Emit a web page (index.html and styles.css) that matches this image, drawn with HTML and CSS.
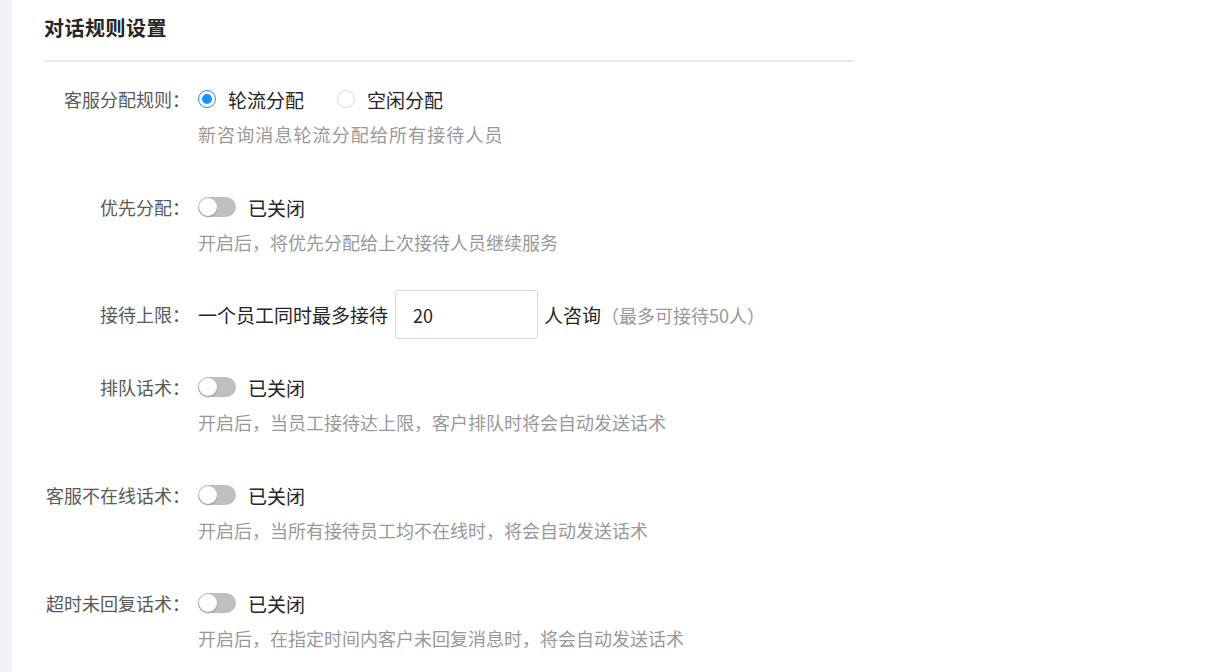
FILE: index.html
```html
<!DOCTYPE html>
<html lang="zh-CN">
<head>
    <meta charset="UTF-8">
    <meta name="viewport" content="width=device-width, initial-scale=1.0">
    <title>对话规则设置</title>
    <link rel="stylesheet" href="styles.css">
</head>
<body>

<div class="layout">
    <div class="side"></div>
    <div class="main">
        <div class="panel">
            <h2 class="panel-title">对话规则设置</h2>

            <div class="form">
                <div class="form-item">
                    <div class="form-label">客服分配规则：</div>
                    <div class="form-body">
                        <div class="form-row">
                            <label class="radio checked"><span class="radio-dot"></span>轮流分配</label>
                            <label class="radio"><span class="radio-dot"></span>空闲分配</label>
                        </div>
                        <div class="form-hint wide">新咨询消息轮流分配给所有接待人员</div>
                    </div>
                </div>

                <div class="form-item before-input">
                    <div class="form-label">优先分配：</div>
                    <div class="form-body">
                        <div class="form-row">
                            <span class="switch"><span class="switch-knob"></span></span>
                            <span class="switch-text">已关闭</span>
                        </div>
                        <div class="form-hint">开启后，将优先分配给上次接待人员继续服务</div>
                    </div>
                </div>

                <div class="form-item input-item">
                    <div class="form-label">接待上限：</div>
                    <div class="form-body">
                        <div class="form-row">
                            <span>一个员工同时最多接待</span>
                            <input class="num-input" type="text" value="20">
                            <span>人咨询</span>
                            <span class="tip">（最多可接待50人）</span>
                        </div>
                    </div>
                </div>

                <div class="form-item">
                    <div class="form-label">排队话术：</div>
                    <div class="form-body">
                        <div class="form-row">
                            <span class="switch"><span class="switch-knob"></span></span>
                            <span class="switch-text">已关闭</span>
                        </div>
                        <div class="form-hint">开启后，当员工接待达上限，客户排队时将会自动发送话术</div>
                    </div>
                </div>

                <div class="form-item">
                    <div class="form-label">客服不在线话术：</div>
                    <div class="form-body">
                        <div class="form-row">
                            <span class="switch"><span class="switch-knob"></span></span>
                            <span class="switch-text">已关闭</span>
                        </div>
                        <div class="form-hint">开启后，当所有接待员工均不在线时，将会自动发送话术</div>
                    </div>
                </div>

                <div class="form-item">
                    <div class="form-label">超时未回复话术：</div>
                    <div class="form-body">
                        <div class="form-row">
                            <span class="switch"><span class="switch-knob"></span></span>
                            <span class="switch-text">已关闭</span>
                        </div>
                        <div class="form-hint">开启后，在指定时间内客户未回复消息时，将会自动发送话术</div>
                    </div>
                </div>
            </div>
        </div>
    </div>
</div>

</body>
</html>
```

FILE: styles.css
```css
body {
    margin: 0;
    padding: 0;
    font-family: "Noto Sans CJK SC", "Noto Sans", sans-serif;
    font-size: 18px;
    color: #262626;
    background-color: #fff;
    overflow: hidden;
}
.layout {
    display: flex;
    min-height: 672px;
}
.side {
    width: 12px;
    flex-shrink: 0;
    background-color: #f0f2f5;
}
.main {
    flex: 1;
    background-color: #fff;
}
.panel {
    width: 811px;
    padding: 14px 0 0 32px;
}
.panel-title {
    margin: 0;
    font-size: 20px;
    font-weight: bold;
    letter-spacing: 0.5px;
    line-height: 28px;
    color: #262626;
    padding-bottom: 18px;
    border-bottom: 2px solid #e8e8e8;
}
.form {
    padding-top: 17px;
}
.form-item {
    display: flex;
    margin-bottom: 40px;
}
.form-item.before-input {
    margin-bottom: 35px;
}
.form-item.input-item {
    margin-bottom: 28px;
}
.form-label {
    width: 146px;
    flex-shrink: 0;
    text-align: right;
    line-height: 40px;
    color: #595959;
}
.input-item .form-label {
    line-height: 49px;
}
.form-body {
    padding-left: 8px;
}
.form-row {
    display: flex;
    align-items: center;
    height: 40px;
    font-size: 19px;
}
.input-item .form-row {
    height: 49px;
}
.form-hint {
    margin-top: 2px;
    line-height: 26px;
    color: #999;
}
.form-hint.wide {
    letter-spacing: 1.1px;
}
.radio {
    display: flex;
    align-items: center;
    margin-right: 33px;
    cursor: pointer;
}
.radio-dot {
    width: 16px;
    height: 16px;
    border: 1px solid #d9d9d9;
    border-radius: 50%;
    margin-right: 12px;
    position: relative;
    background: #fff;
}
.radio.checked .radio-dot {
    border-color: #1890ff;
}
.radio.checked .radio-dot::after {
    content: "";
    position: absolute;
    left: 3px;
    top: 3px;
    width: 10px;
    height: 10px;
    border-radius: 50%;
    background-color: #1890ff;
}
.switch {
    width: 38px;
    height: 20px;
    border-radius: 10px;
    background-color: #bfbfbf;
    position: relative;
    margin-right: 12px;
}
.switch-knob {
    position: absolute;
    left: 1px;
    top: 1px;
    width: 18px;
    height: 18px;
    border-radius: 50%;
    background-color: #fff;
    box-shadow: 0 1px 2px rgba(0,35,11,0.3);
}
.num-input {
    width: 143px;
    height: 49px;
    box-sizing: border-box;
    margin: 0 6px 0 7px;
    padding: 0 17px;
    border: 1px solid #d9d9d9;
    border-radius: 3px;
    font-family: inherit;
    font-size: 18px;
    color: #262626;
    outline: none;
}
.tip {
    font-size: 18px;
    color: #999;
}
```
